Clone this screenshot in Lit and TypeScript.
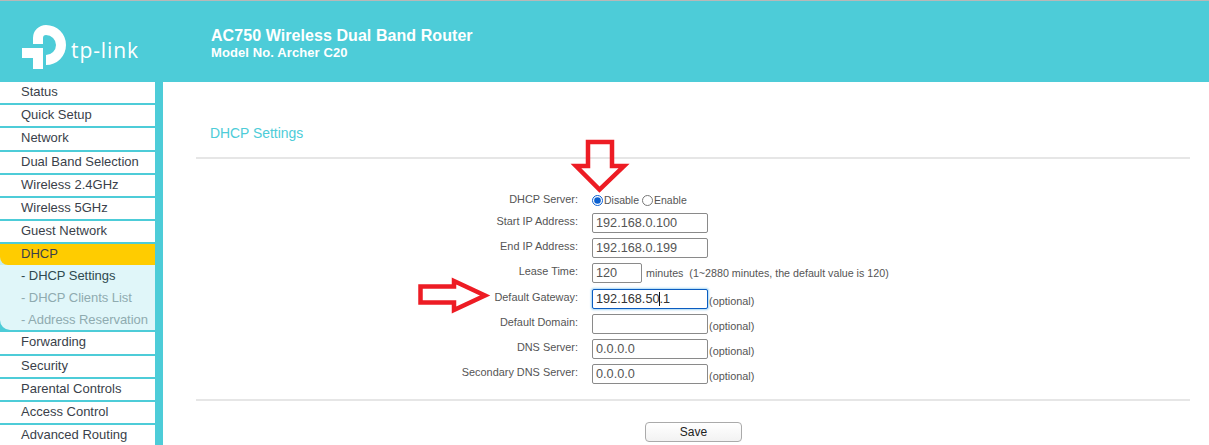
import { LitElement, css, html } from "lit";
import { customElement } from "lit/decorators.js";

const TOP_MENU = ["Status", "Quick Setup", "Network", "Dual Band Selection", "Wireless 2.4GHz", "Wireless 5GHz", "Guest Network"];
const BOTTOM_MENU = ["Forwarding", "Security", "Parental Controls", "Access Control", "Advanced Routing"];

@customElement("app-root")
export class AppRoot extends LitElement {
  static styles = css`
    :host {
      display: block;
      position: relative;
      height: 445px;
      overflow: hidden;
      background: #fff;
      font-family: "Liberation Sans", Arial, sans-serif;
      color: #555;
    }
    .header {
      display: flex;
      height: 81px;
      background: #4dccd8;
      border-top: 1px solid #b8b8b8;
      color: #fff;
    }
    .logo {
      display: flex;
      align-items: flex-start;
      width: 211px;
      padding: 24px 0 0 22px;
      box-sizing: border-box;
    }
    .logo svg {
      display: block;
      flex: none;
    }
    .logo span {
      margin: 11px 0 0 5px;
      font-family: "Open Sans", sans-serif;
      font-weight: 400;
      font-size: 21px;
      line-height: 28px;
      letter-spacing: 0.9px;
      color: #fff;
    }
    .model {
      padding-top: 26px;
      font-weight: 700;
    }
    .model div:first-child {
      font-size: 16px;
      line-height: 18px;
      letter-spacing: 0.07px;
    }
    .model div:last-child {
      font-size: 13px;
      line-height: 16px;
      letter-spacing: 0.1px;
    }
    .body {
      display: flex;
    }
    .side {
      width: 155px;
      border-right: 8px solid #4dccd8;
      font-size: 13px;
      color: #3a3f4a;
      flex: none;
    }
    .item {
      height: 21.2px;
      line-height: 20.8px;
      padding-left: 21px;
      border-bottom: 2px solid #4dccd8;
      white-space: nowrap;
    }
    .on-wrap {
      background: #c8eef2;
    }
    .item.on {
      height: 21px;
      line-height: 20px;
      border-bottom: 0;
      background: #ffcc00;
      border-bottom-left-radius: 8px;
    }
    .subs {
      background: #4dccd8;
      border-bottom: 2px solid #4dccd8;
    }
    .subs-in {
      height: 65px;
      background: #e0f6f9;
      border-bottom-left-radius: 10px;
    }
    .sub {
      height: 21.6px;
      line-height: 21px;
      padding-left: 21px;
      color: #8fabb0;
      letter-spacing: -0.05px;
      white-space: nowrap;
    }
    .sub.cur {
      color: #2f4a50;
    }
    .main {
      flex: 1;
      padding: 0 19px 0 33px;
    }
    h1 {
      margin: 0;
      padding: 43px 0 0 14px;
      height: 32px;
      font-weight: 400;
      font-size: 13.9px;
      line-height: 16px;
      color: #4dccd8;
    }
    hr {
      margin: 0;
      border: 0;
      height: 2px;
      background: #e6e6e6;
    }
    .form {
      display: grid;
      grid-template-columns: 382px 1fr;
      column-gap: 14px;
      padding-top: 31px;
      font-size: 10.9px;
    }
    .lbl {
      text-align: right;
      line-height: 17px;
      height: 17px;
    }
    .lbl.first {
      line-height: 19px;
    }
    .val {
      display: flex;
      align-items: center;
      height: 20px;
      position: relative;
      margin-bottom: 5px;
    }
    .val.first {
      margin-bottom: 3px;
    }
    .val.lease {
      margin-bottom: 6px;
    }
    .val.last {
      margin-bottom: 0;
    }
    .opt {
      padding: 3px 0 0 1px;
    }
    .radio {
      margin: 0 1px 0 0;
      width: 11px;
      height: 11px;
      accent-color: #0a5fd0;
    }
    .radio + span {
      margin-right: 3px;
      font-size: 10.5px;
    }
    input.text {
      width: 116px;
      height: 20px;
      box-sizing: border-box;
      margin: 0;
      padding: 0 3px;
      border: 1px solid #8a8a8a;
      border-radius: 2px;
      background: #fff;
      font: 12.7px "Liberation Sans", Arial, sans-serif;
      color: #555;
      outline: none;
    }
    input.short {
      width: 50px;
    }
    input.focus {
      border-color: #0b5cc0;
      box-shadow: 0 0 2px 1px #a9d8f5;
      color: #333;
    }
    .caret {
      position: absolute;
      left: 67px;
      top: 3px;
      width: 1px;
      height: 14px;
      background: #111;
    }
    .hint {
      margin-left: 4px;
      font-size: 10.7px;
    }
    .gap {
      height: 15px;
    }
    .foot {
      padding: 21px 0 0 449px;
    }
    button {
      display: block;
      width: 97px;
      height: 20px;
      padding: 0;
      border: 1px solid #aaa;
      border-radius: 4px;
      background: linear-gradient(#fff, #f2f2f2);
      font: 12px "Liberation Sans", Arial, sans-serif;
      color: #222;
    }
    .arrow {
      position: absolute;
      left: 0;
      top: 0;
      pointer-events: none;
    }
  `;

  render() {
    return html`
      <div class="header">
        <div class="logo">
          <svg width="44" height="45" viewBox="22 25 44 45" fill="#fff">
            <path d="M33 44 V38 A13 13 0 0 1 46 25 A20 20 0 0 1 46 65 V55 A10 10 0 0 0 46 35 A3 3 0 0 0 43 38 V44 Z" />
            <path d="M22 48 H43 V69 H33 V58 H22 Z" />
          </svg>
          <span>tp-link</span>
        </div>
        <div class="model">
          <div>AC750 Wireless Dual Band Router</div>
          <div>Model No. Archer C20</div>
        </div>
      </div>
      <div class="body">
        <nav class="side">
          ${TOP_MENU.map((m) => html`<div class="item">${m}</div>`)}
          <div class="on-wrap"><div class="item on">DHCP</div></div>
          <div class="subs">
            <div class="subs-in">
              <div class="sub cur">- DHCP Settings</div>
              <div class="sub">- DHCP Clients List</div>
              <div class="sub">- Address Reservation</div>
            </div>
          </div>
          ${BOTTOM_MENU.map((m) => html`<div class="item">${m}</div>`)}
        </nav>
        <main class="main">
          <h1>DHCP Settings</h1>
          <hr />
          <div class="form">
            <div class="lbl first">DHCP Server:</div>
            <div class="val first">
              <input class="radio" type="radio" name="dhcp" checked /><span>Disable</span>
              <input class="radio" type="radio" name="dhcp" /><span>Enable</span>
            </div>
            <div class="lbl">Start IP Address:</div>
            <div class="val"><input class="text" value="192.168.0.100" /></div>
            <div class="lbl">End IP Address:</div>
            <div class="val"><input class="text" value="192.168.0.199" /></div>
            <div class="lbl">Lease Time:</div>
            <div class="val lease">
              <input class="text short" value="120" />
              <span class="hint">minutes &nbsp;(1~2880 minutes, the default value is 120)</span>
            </div>
            <div class="lbl">Default Gateway:</div>
            <div class="val">
              <input class="text focus" value="192.168.50.1" /><i class="caret"></i>
              <span class="opt">(optional)</span>
            </div>
            <div class="lbl">Default Domain:</div>
            <div class="val"><input class="text" /><span class="opt">(optional)</span></div>
            <div class="lbl">DNS Server:</div>
            <div class="val"><input class="text" value="0.0.0.0" /><span class="opt">(optional)</span></div>
            <div class="lbl">Secondary DNS Server:</div>
            <div class="val last"><input class="text" value="0.0.0.0" /><span class="opt">(optional)</span></div>
          </div>
          <div class="gap"></div>
          <hr />
          <div class="foot"><button>Save</button></div>
        </main>
      </div>
      <svg class="arrow" width="1209" height="445" fill="none" stroke="#ed1c24" stroke-width="4.5">
        <path d="M588 142 H612 V166 H624 L599.5 189.5 L576 166 H588 Z" />
        <path d="M420.5 286.5 H454 V281 L485 295.5 L454 310 V302.5 H420.5 Z" />
      </svg>
    `;
  }
}

declare global {
  interface HTMLElementTagNameMap {
    "app-root": AppRoot;
  }
}
